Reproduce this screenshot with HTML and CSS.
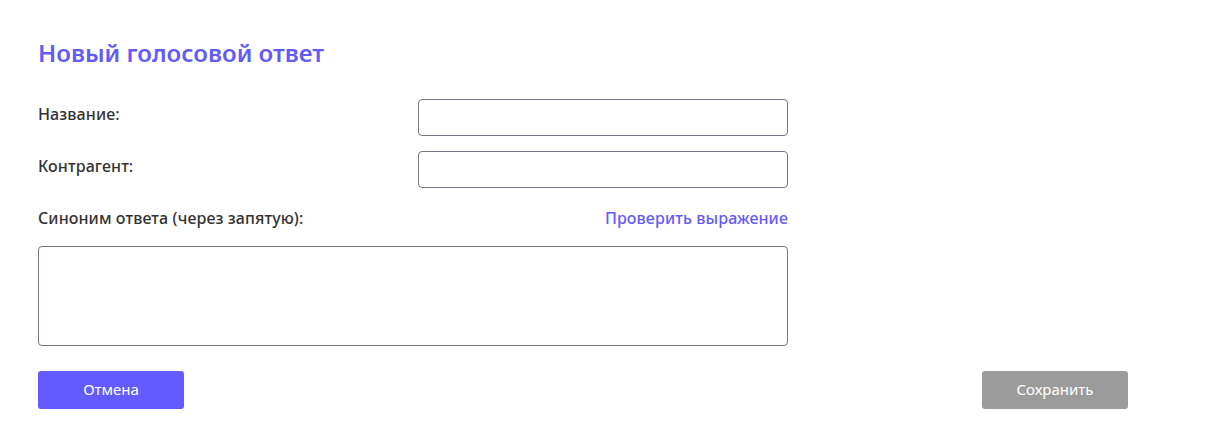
FILE: index.html
```html
<!DOCTYPE html>
<html lang="ru">
<head>
<meta charset="utf-8">
<link rel="stylesheet" href="styles.css">
</head>
<body>
<div class="page">
  <h1 class="title">Новый голосовой ответ</h1>
  <div class="form">
    <div class="row">
      <label class="label">Название:</label>
      <input class="input" type="text">
    </div>
    <div class="row">
      <label class="label">Контрагент:</label>
      <input class="input" type="text">
    </div>
    <div class="syn-head">
      <label class="label">Синоним ответа (через запятую):</label>
      <a class="link">Проверить выражение</a>
    </div>
    <textarea class="textarea"></textarea>
  </div>
  <div class="actions">
    <button class="btn btn-primary">Отмена</button>
    <button class="btn btn-disabled">Сохранить</button>
  </div>
</div>
</body>
</html>
```
FILE: styles.css
```css
* { box-sizing: border-box; }
html, body { margin: 0; background: #fff; }
body { font-family: "Noto Sans", "DejaVu Sans", sans-serif; color: #333; }
.page { width: 1128px; padding: 37px 0 0 38px; }
.title { margin: 0; font-size: 24px; line-height: 32px; font-weight: 600; color: #635bf8; letter-spacing: 0; }
.form { width: 750px; margin-top: 30px; display: flex; flex-direction: column; }
.row { display: flex; justify-content: space-between; align-items: flex-start; margin-bottom: 15px; }
.label { font-size: 16px; line-height: 30px; font-weight: 500; color: #333; letter-spacing: 0.1px; }
.input { width: 370px; height: 37px; border: 1px solid #767686; border-radius: 4px; background: #fff; outline: none; }
.syn-head { display: flex; justify-content: space-between; align-items: center; height: 30px; margin-top: 0; }
.link { font-size: 16px; font-weight: 500; color: #635bf8; cursor: pointer; letter-spacing: 0.1px; }
.textarea { width: 750px; height: 100px; margin-top: 13px; border: 1px solid #767686; border-radius: 4px; resize: none; outline: none; }
.actions { display: flex; justify-content: space-between; margin-top: 25px; }
.btn { width: 146px; height: 38px; padding: 0 0 3px; border: 0; border-radius: 3px; font-family: inherit; font-size: 15px; color: #fff; }
.btn-primary { background: #635bff; }
.btn-disabled { background: #9b9b9b; }
```
